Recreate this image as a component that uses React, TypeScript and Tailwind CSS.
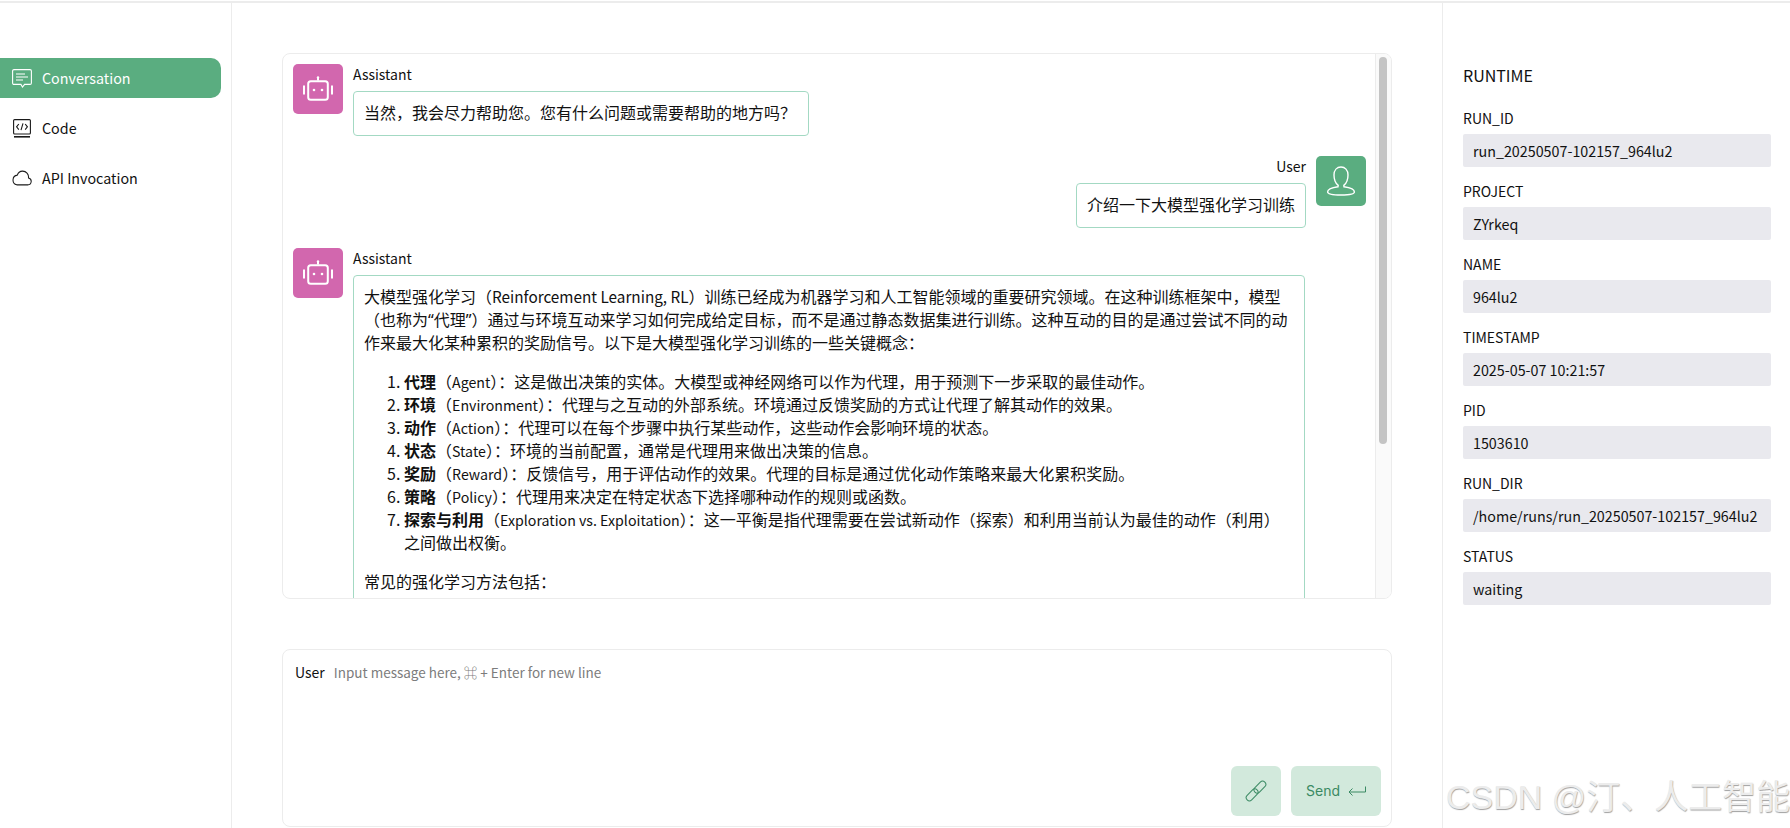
const runtime = [
  { label: "RUN_ID", value: "run_20250507-102157_964lu2" },
  { label: "PROJECT", value: "ZYrkeq" },
  { label: "NAME", value: "964lu2" },
  { label: "TIMESTAMP", value: "2025-05-07 10:21:57" },
  { label: "PID", value: "1503610" },
  { label: "RUN_DIR", value: "/home/runs/run_20250507-102157_964lu2" },
  { label: "STATUS", value: "waiting" },
];

const concepts = [
  { term: "代理", en: "Agent", text: "这是做出决策的实体。大模型或神经网络可以作为代理，用于预测下一步采取的最佳动作。" },
  { term: "环境", en: "Environment", text: "代理与之互动的外部系统。环境通过反馈奖励的方式让代理了解其动作的效果。" },
  { term: "动作", en: "Action", text: "代理可以在每个步骤中执行某些动作，这些动作会影响环境的状态。" },
  { term: "状态", en: "State", text: "环境的当前配置，通常是代理用来做出决策的信息。" },
  { term: "奖励", en: "Reward", text: "反馈信号，用于评估动作的效果。代理的目标是通过优化动作策略来最大化累积奖励。" },
  { term: "策略", en: "Policy", text: "代理用来决定在特定状态下选择哪种动作的规则或函数。" },
  { term: "探索与利用", en: "Exploration vs. Exploitation", text: "这一平衡是指代理需要在尝试新动作（探索）和利用当前认为最佳的动作（利用）之间做出权衡。" },
];

function ChatIcon() {
  return (
    <svg width="20" height="19" viewBox="0 0 20 19" fill="none" stroke="currentColor" strokeWidth="1.1">
      <path d="M2 .6h16a1.4 1.4 0 0 1 1.4 1.4v12a1.4 1.4 0 0 1-1.4 1.4h-5.4L10.5 18l-1.6-2.6H2A1.4 1.4 0 0 1 .6 14V2A1.4 1.4 0 0 1 2 .6z" />
      <path d="M4 5h9M4 8h12M4 11h7" />
    </svg>
  );
}

function CodeIcon() {
  return (
    <svg width="18" height="19" viewBox="0 0 18 19" fill="none" stroke="#1a1a1a" strokeWidth="1.1">
      <rect x=".6" y=".6" width="16.8" height="14.4" rx="1" />
      <path d="M5.8 5 3.6 7.8l2.2 2.8M12.2 5l2.2 2.8-2.2 2.8M10 4.4 8 11.2" />
      <path d="M1 17.8h16" strokeWidth="1.6" />
    </svg>
  );
}

function CloudIcon() {
  return (
    <svg width="21" height="16" viewBox="0 0 21 16" fill="none" stroke="#1a1a1a" strokeWidth="1.1" strokeLinejoin="round">
      <path d="M5 15.2h11.5a3.7 3.7 0 0 0 .8-7.3A6.2 6.2 0 0 0 11 .8 6 6 0 0 0 5.6 5a5.2 5.2 0 0 0-.6 10.2z" />
    </svg>
  );
}

function BotIcon() {
  return (
    <svg width="30" height="26" viewBox="0 0 30 26" fill="none" stroke="white">
      <rect x="5.2" y="5.2" width="19.6" height="18.6" rx="2.6" strokeWidth="2" />
      <path d="M15 4.5V1.5M1 9.5v9M29 9.5v9" strokeWidth="2" />
      <circle cx="15" cy="1.5" r="1.2" fill="white" stroke="none" />
      <circle cx="11" cy="14" r="1.3" fill="white" stroke="none" />
      <circle cx="19" cy="14" r="1.3" fill="white" stroke="none" />
    </svg>
  );
}

function UserIcon() {
  return (
    <svg width="30" height="30" viewBox="0 0 30 30" fill="none" stroke="white" strokeWidth="1.4">
      <path d="M15 1c-4 0-7 3-7 8 0 5 2.4 9 4.2 10.4l-.2 1.4C6.5 21.6 1.6 23 1.6 26c0 2 3 3 13.4 3s13.4-1 13.4-3c0-3-4.9-4.4-10.4-5.2l-.2-1.4C19.6 18 22 14 22 9c0-5-3-8-7-8z" />
    </svg>
  );
}

function LinkIcon() {
  return (
    <svg width="22" height="22" viewBox="0 0 22 22" fill="none" stroke="#3a8a63" strokeWidth="1">
      <g transform="rotate(-45 11 11)">
        <rect x="-1.5" y="7.8" width="14" height="6.4" rx="3.2" />
        <rect x="9.5" y="7.8" width="14" height="6.4" rx="3.2" />
      </g>
    </svg>
  );
}

function ReturnIcon() {
  return (
    <svg width="18" height="10" viewBox="0 0 18 10" fill="none" stroke="#3a8a63" strokeWidth="1">
      <path d="M17.5 .5v5.5H1M4.5 2.5 1 6l3.5 3.5" />
    </svg>
  );
}

function Avatar({ user }: { user?: boolean }) {
  return (
    <div className={`flex h-[50px] w-[50px] shrink-0 items-center justify-center rounded-[5px] ${user ? "bg-[#5aad80]" : "bg-[#d267ae]"}`}>
      {user ? <UserIcon /> : <BotIcon />}
    </div>
  );
}

function Quote({ children }: { children: string }) {
  return <span className="font-['Noto_Sans',sans-serif] leading-none">{children}</span>;
}

export default function App() {
  return (
    <div className="flex h-[828px] w-[1790px] flex-col overflow-hidden bg-white text-[#111] font-['Noto_Sans_CJK_SC','Noto_Sans',sans-serif] [text-spacing-trim:space-all]">
      <div className="h-[3px] shrink-0 border-b-2 border-[#ececec]" />
      <div className="flex min-h-0 flex-1">
        {/* left nav */}
        <div className="w-[232px] shrink-0 border-r border-[#ececec] pt-[55px] pr-[10px] text-[14.3px]">
          <div className="flex h-10 items-center gap-[10px] rounded-r-[10px] bg-[#5aad80] pl-3 text-white">
            <span className="flex w-5 justify-center"><ChatIcon /></span>
            Conversation
          </div>
          <div className="mt-[10px] flex h-10 items-center gap-[10px] pl-3">
            <span className="flex w-5 justify-center"><CodeIcon /></span>
            Code
          </div>
          <div className="mt-[10px] flex h-10 items-center gap-[10px] pl-3">
            <span className="flex w-5 justify-center"><CloudIcon /></span>
            API Invocation
          </div>
        </div>

        {/* main */}
        <div className="min-w-0 flex-1 px-[50px] pt-[50px]">
          <div className="flex h-[546px] overflow-hidden rounded-lg border border-[#ececec]">
            <div className="min-w-0 flex-1 overflow-hidden py-[10px] pr-[9px] pl-[10px] text-base leading-[23px]">
              <div className="flex gap-[10px]">
                <Avatar />
                <div>
                  <div className="h-[27px] text-sm leading-[20px]">Assistant</div>
                  <div className="rounded border border-[#a3d9c3] pt-[9px] pr-[12px] pb-[11px] pl-[10px]">当然，我会尽力帮助您。您有什么问题或需要帮助的地方吗？</div>
                </div>
              </div>

              <div className="mt-5 flex justify-end gap-[10px]">
                <div className="flex flex-col items-end">
                  <div className="h-[27px] text-sm leading-[20px]">User</div>
                  <div className="rounded border border-[#a3d9c3] px-[10px] pt-[9px] pb-[11px]">介绍一下大模型强化学习训练</div>
                </div>
                <Avatar user />
              </div>

              <div className="mt-5 flex gap-[10px]">
                <Avatar />
                <div className="min-w-0 w-[952px]">
                  <div className="h-[27px] text-sm leading-[20px]">Assistant</div>
                  <div className="rounded border border-[#a3d9c3] pt-[9px] pr-[12px] pb-[11px] pl-[10px]">
                    <p>
                      大模型强化学习（<span className="text-[15.3px] leading-none">Reinforcement Learning, RL</span>）训练已经成为机器学习和人工智能领域的重要研究领域。在这种训练框架中，模型（也称为<Quote>“</Quote>代理<Quote>”</Quote>）通过与环境互动来学习如何完成给定目标，而不是通过静态数据集进行训练。这种互动的目的是通过尝试不同的动作来最大化某种累积的奖励信号。以下是大模型强化学习训练的一些关键概念：
                    </p>
                    <ol className="mt-4 list-decimal pl-10">
                      {concepts.map((c) => (
                        <li key={c.term}>
                          <span className="font-bold">{c.term}</span>（<span className="text-[14.2px] leading-none">{c.en}</span><span className="tracking-[-8px]">）</span>：{c.text}
                        </li>
                      ))}
                    </ol>
                    <p className="mt-4">常见的强化学习方法包括：</p>
                  </div>
                </div>
              </div>
            </div>
            {/* scrollbar */}
            <div className="w-[16px] shrink-0 border-l border-[#ececec] bg-[#fafafa] pt-[3px] pl-[3px]">
              <div className="h-[387px] w-2 rounded-full bg-[#c4c4c4]" />
            </div>
          </div>

          {/* composer */}
          <div className="mt-[50px] flex h-[178px] flex-col rounded-lg border border-[#ececec] pt-[11px] pr-[10px] pb-[10px] pl-[12px]">
            <div className="flex items-baseline gap-[9px] text-sm leading-[22px]">
              <span>User</span>
              <span className="text-[13.5px] text-[#7c7c7c]">Input message here, ⌘ + Enter for new line</span>
            </div>
            <div className="mt-auto flex justify-end gap-[10px]">
              <div className="flex h-[50px] w-[50px] items-center justify-center rounded-md bg-[#d2e9dc]">
                <LinkIcon />
              </div>
              <div className="flex h-[50px] w-[90px] items-center justify-center gap-2 rounded-md bg-[#d2e9dc] font-['Inter',sans-serif] text-sm text-[#3a8a63]">
                Send
                <ReturnIcon />
              </div>
            </div>
          </div>
        </div>

        {/* runtime */}
        <div className="w-[348px] shrink-0 border-l border-[#ececec] pt-[59px] pr-[19px] pl-[20px]">
          <div className="mb-[19px] text-base leading-[26px]">RUNTIME</div>
          {runtime.map((r) => (
            <div key={r.label} className="mt-[13px]">
              <div className="h-[27px] text-sm leading-[22px]">{r.label}</div>
              <div className="flex h-[33px] items-center whitespace-nowrap rounded-[2px] bg-[#e9e9ee] px-[10px] text-[14.3px]">{r.value}</div>
            </div>
          ))}
        </div>
      </div>

      {/* watermark */}
      <div className="absolute top-[775px] left-[1446px] whitespace-nowrap font-['Liberation_Sans','Noto_Sans_CJK_SC',sans-serif] text-[34px] leading-[44px] text-[#ececec] [text-shadow:0.5px_0.5px_1px_#a0a0a0]">
        CSDN @汀、人工智能
      </div>
    </div>
  );
}
